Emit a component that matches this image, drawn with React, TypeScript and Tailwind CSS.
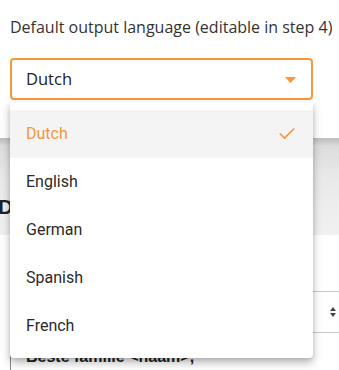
import { Check } from "lucide-react";

const languages = ["Dutch", "English", "German", "Spanish", "French"];

export default function App() {
  const selected = "Dutch";

  return (
    <div className="relative h-[370px] w-[339px] overflow-hidden bg-white text-[#333] [font-family:'Open_Sans',sans-serif]">
      {/* step header */}
      <div className="h-[138px] px-[10px] pt-[17px]">
        <label className="block text-[16px] leading-[21px] whitespace-nowrap text-[#333]">
          Default output language (editable in step 4)
        </label>
        <div className="mt-[20px] flex h-[42px] w-[303px] items-center justify-between rounded-[4px] border-2 border-[#f7963a] pl-[14px] pr-[15px]">
          <span className="text-[16.5px] text-[#222]">{selected}</span>
          <svg width="11" height="6" viewBox="0 0 11 6" className="mt-[1px]">
            <path d="M0 0h11L5.5 6z" fill="#f7963a" />
          </svg>
        </div>
      </div>

      {/* greyed section behind the menu */}
      <div className="h-[97px] bg-[linear-gradient(to_bottom,#bdbdbd_0px,#dcdcdc_8px,#e9e9e9_40px,#f1f1f1_97px)] pt-[56px]">
        <h2 className="ml-[-2px] text-[21px] font-bold leading-[26px] text-[#222] [font-family:'Liberation_Sans',sans-serif]">
          Default
        </h2>
      </div>

      <div className="px-[10px] pt-[56px]">
        <div className="flex h-[42px] w-[340px] items-center justify-end border-y border-[#c8c8c8] pr-[14px]">
          <svg width="6" height="10" viewBox="0 0 6 10">
            <path d="M3 0L6 4H0z M3 10L0 6h6z" fill="#444" />
          </svg>
        </div>
        <div className="mt-[22px] h-[40px] border-l border-[#888] pl-[15px]">
          <p className="-mt-[8px] text-[16px] font-bold leading-[20px] text-[#222] [font-family:'Liberation_Sans',sans-serif]">
            Beste familie &lt;naam&gt;,
          </p>
        </div>
      </div>

      {/* open dropdown */}
      <ul className="absolute left-[10px] top-[102px] w-[303px] rounded-b-[4px] bg-white py-[8px] shadow-[0_5px_10px_rgba(0,0,0,0.25),0_2px_4px_rgba(0,0,0,0.12)] [font-family:Roboto,sans-serif]">
        {languages.map((lang) => {
          const active = lang === selected;
          return (
            <li
              key={lang}
              className={`flex h-[48px] items-center justify-between pl-[16px] pr-[16px] text-[16px] ${
                active ? "bg-[#f4f4f4] text-[#f7963a]" : "text-[#2a2a2a]"
              }`}
            >
              <span>{lang}</span>
              {active && <Check className="size-[20px]" strokeWidth={2} color="#f7963a" />}
            </li>
          );
        })}
      </ul>
    </div>
  );
}
